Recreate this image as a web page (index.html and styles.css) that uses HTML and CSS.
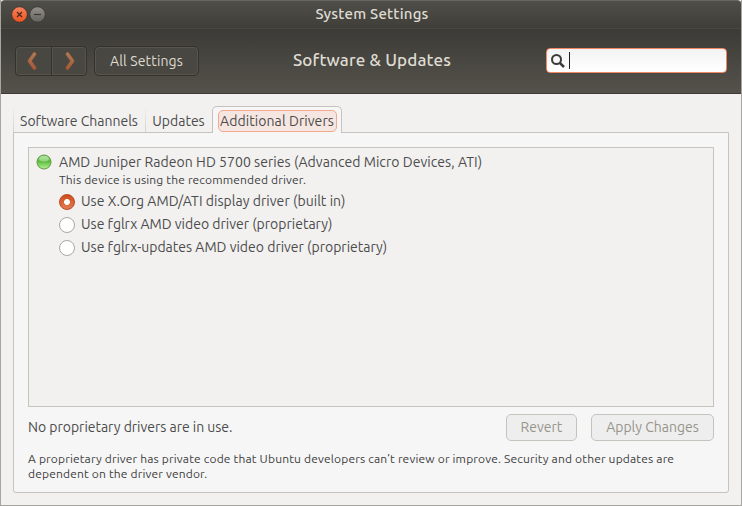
FILE: index.html
```html
<!DOCTYPE html>
<html lang="en">
<head>
<meta charset="utf-8">
<title>System Settings</title>
<link rel="stylesheet" href="styles.css">
</head>
<body>
<div class="window">
  <header class="chrome">
    <div class="titlebar">
      <svg class="controls" width="36" height="18" viewBox="0 0 36 18">
        <defs>
          <linearGradient id="close" x1="0" y1="0" x2="0" y2="1"><stop offset="0" stop-color="#f9835d"/><stop offset="1" stop-color="#e95420"/></linearGradient>
          <linearGradient id="min" x1="0" y1="0" x2="0" y2="1"><stop offset="0" stop-color="#93918a"/><stop offset="1" stop-color="#65635d"/></linearGradient>
        </defs>
        <circle cx="9.500" cy="8.500" r="7.800" fill="url(#close)" stroke="#3a302a" stroke-width=".8"/>
        <path d="M7 6l5 5M12 6l-5 5" stroke="#4a251a" stroke-width="1.200"/>
        <circle cx="27.500" cy="8.500" r="7.800" fill="url(#min)" stroke="#35332e" stroke-width=".8"/>
        <path d="M24 8.500h7" stroke="#3b3935" stroke-width="1.200"/>
      </svg>
      <div class="window-title"><span class="t t-title">System Settings</span></div>
    </div>
    <div class="toolbar">
      <div class="nav">
        <button class="nav-btn" aria-label="Back"><svg width="12" height="20" viewBox="0 0 12 20"><path d="M8.500 3L3.500 10l5 7" class="chev-edge"/><path d="M8.500 3L3.500 10l5 7" class="chev" stroke="url(#chev)"/><defs><linearGradient id="chev" gradientUnits="userSpaceOnUse" x1="0" y1="2" x2="0" y2="18"><stop offset="0" stop-color="#ab7b56"/><stop offset="1" stop-color="#a65a38"/></linearGradient></defs></svg></button>
        <button class="nav-btn" aria-label="Forward"><svg width="12" height="20" viewBox="0 0 12 20"><path d="M4.500 3L9.500 10l-5 7" class="chev-edge"/><path d="M4.500 3L9.500 10l-5 7" class="chev" stroke="url(#chev)"/></svg></button>
      </div>
      <button class="all-settings"><span class="t t-all">All Settings</span></button>
      <h1 class="heading"><span class="t t-heading">Software &amp; Updates</span></h1>
      <div class="search">
        <svg width="16" height="16" viewBox="0 0 16 16"><circle cx="6.500" cy="6.500" r="4.500" fill="none" stroke="#3c3b37" stroke-width="2"/><path d="M9.800 9.800L14 14" stroke="#3c3b37" stroke-width="2.500"/></svg>
        <i class="caret"></i>
      </div>
    </div>
  </header>
  <main class="content">
    <nav class="tabs">
      <div class="tab tab-channels"><span class="t t-channels">Software Channels</span></div>
      <div class="tab tab-updates"><span class="t t-updates">Updates</span></div>
      <div class="tab active"><div class="focus"><span class="t t-drivers">Additional Drivers</span></div></div>
    </nav>
    <section class="page">
      <div class="list">
        <div class="device">
          <svg width="16" height="16" viewBox="0 0 16 16"><defs><linearGradient id="led" x1="0" y1="0" x2="0" y2="1"><stop offset="0" stop-color="#8fdc78"/><stop offset=".45" stop-color="#5cbb3c"/><stop offset="1" stop-color="#b2f294"/></linearGradient></defs><circle cx="8" cy="8" r="7" fill="url(#led)" stroke="#62963f"/><ellipse cx="8" cy="4.800" rx="4.800" ry="2.700" fill="#fff" opacity=".35"/></svg>
          <span class="t t-device">AMD Juniper Radeon HD 5700 series (Advanced Micro Devices, ATI)</span>
        </div>
        <div class="note"><span class="t t-note">This device is using the recommended driver.</span></div>
        <div class="option"><i class="radio checked"></i><span class="t t-o1">Use X.Org AMD/ATI display driver (built in)</span></div>
        <div class="option"><i class="radio"></i><span class="t">Use fglrx AMD video driver (proprietary)</span></div>
        <div class="option"><i class="radio"></i><span class="t">Use fglrx-updates AMD video driver (proprietary)</span></div>
      </div>
      <div class="actions">
        <span class="t t-status">No proprietary drivers are in use.</span>
        <button class="btn revert" disabled><span class="t">Revert</span></button>
        <button class="btn apply" disabled><span class="t">Apply Changes</span></button>
      </div>
      <p class="help"><span class="t">A proprietary driver has private code that Ubuntu developers can’t review or improve. Security and other updates are</span><br><span class="t">dependent on the driver vendor.</span></p>
    </section>
  </main>
</div>
</body>
</html>
```
FILE: styles.css
```css
* { box-sizing: border-box; }
body { margin: 0; font-family: Ubuntu, "Noto Sans", "Open Sans", sans-serif; font-size: 14px; color: #4c4c4c; background: #f2f1f0; }
button { font: inherit; padding: 0; margin: 0; }
.t { white-space: nowrap; }
.t-title { letter-spacing: .2px; }
.t-all { letter-spacing: .15px; }
.t-heading { letter-spacing: .14px; }
.t-drivers { letter-spacing: .08px; }
.t-device { letter-spacing: .045px; }
.t-o1 { letter-spacing: .04px; }
.window { width: 742px; height: 506px; display: flex; flex-direction: column; background: #f2f1f0; border: 1px solid #a7a5a2; border-top: 0; overflow: hidden; }
.chrome { height: 94px; margin: 0 -1px; flex: none; color: #dfdbd2; border-bottom: 1px solid #3c3b37; border-radius: 5px 5px 0 0; }
.titlebar { height: 28px; display: flex; align-items: center; padding-left: 10px; background: linear-gradient(#504e49, #3f3e39); border-top: 1px solid #67655f; border-radius: 5px 5px 0 0; }
.controls { flex: none; }
.window-title { flex: 1; padding: 0 44px 2px 0; text-align: center; font-size: 15px; font-weight: 500; }
.toolbar { height: 65px; display: flex; align-items: center; padding: 0 15px 0; background: linear-gradient(#3c3b37, #55524b); border-top: 1px solid #494843; }
.nav { display: flex; width: 72px; height: 30px; border: 1px solid #33322e; border-radius: 4px; background: #494741; box-shadow: inset 0 0 0 1px #56544d; }
.nav-btn { width: 35px; border: 0; background: none; display: flex; align-items: center; justify-content: center; }
.nav-btn:first-child { padding-right: 3px; }
.nav-btn + .nav-btn { border-left: 1px solid #33322e; box-shadow: inset 1px 0 #56544d; }
.chev-edge { fill: none; stroke: #704735; stroke-width: 4.4; stroke-linecap: round; stroke-linejoin: round; }
.chev { fill: none; stroke-width: 3.2; stroke-linecap: round; stroke-linejoin: round; }
.all-settings { width: 105px; height: 30px; margin-left: 7px; color: #dfdbd2; background: #494741; border: 1px solid #33322e; border-radius: 5px; box-shadow: inset 0 0 0 1px #56544d; }
.heading { flex: 1; margin: 0; padding: 0 1px 3px 0; text-align: center; font-size: 17px; font-weight: 500; }
.search { width: 181px; height: 25px; margin-top: -1px; display: flex; align-items: center; padding-left: 3px; border: 1px solid #f28763; border-radius: 4px; background: linear-gradient(#f3f3f3, #fff); }
.caret { width: 1px; height: 17px; margin-left: 3px; background: #222; }
.content { flex: 1; padding: 12px 12px 12px; display: flex; flex-direction: column; }
.tabs { display: flex; height: 27px; margin-bottom: -1px; z-index: 1; }
.tab { display: flex; align-items: center; justify-content: center; height: 26px; padding-top: 4px; }
.tab-channels, .tab-updates { border-left: 1px solid; border-image: linear-gradient(#f2f1f0, #d3d0cd) 1; padding-right: 1px; }
.tab-channels { width: 132px; }
.tab-updates { width: 67px; }
.tab.active { width: 130px; height: 27px; padding: 2px 0 0; border: 1px solid #c6c3bf; border-bottom: 0; border-radius: 5px 5px 0 0; background: #f6f6f6; }
.focus { width: 119px; height: 22px; display: flex; align-items: center; justify-content: center; border: 1px solid #f2a98d; border-radius: 5px; background: #f6e6e1; }
.page { flex: 1; border: 1px solid #c6c3bf; border-radius: 0 0 3px 3px; background: #f6f6f6; padding: 14px 14px 0; }
.list { height: 260px; border: 1px solid #c6c3bf; background: #f2f1f0; padding: 4px 7px; }
.device { display: flex; align-items: center; height: 20px; gap: 7px; }
.note { height: 18px; line-height: 15px; padding-left: 23px; font-size: 12px; letter-spacing: .155px; color: #404040; }
.option { display: flex; align-items: center; height: 23px; padding-left: 23px; gap: 7px; }
.option .t { margin-left: -1px; padding-bottom: 1px; }
.radio { width: 16px; height: 16px; margin-top: 1px; border: 1px solid #aaa8a5; border-radius: 50%; background: #fff; }
.radio.checked { border-color: #b9481f; background: radial-gradient(circle, #fff 0 2.6px, transparent 3.3px), linear-gradient(#cf4c1b, #e47c55); }
.actions { display: flex; align-items: center; height: 27px; margin-top: 7px; }
.t-status { padding-bottom: 1px; letter-spacing: -.02px; }
.btn { height: 27px; color: #97948b; background: #eeeeee; border: 1px solid #c6c3bf; border-radius: 5px; padding-bottom: 1px; }
.revert { width: 71px; margin-left: auto; }
.apply { width: 123px; margin-left: 14px; }
.help { margin: 10px 0 0; font-size: 12px; line-height: 15px; letter-spacing: .169px; color: #404040; }
```
